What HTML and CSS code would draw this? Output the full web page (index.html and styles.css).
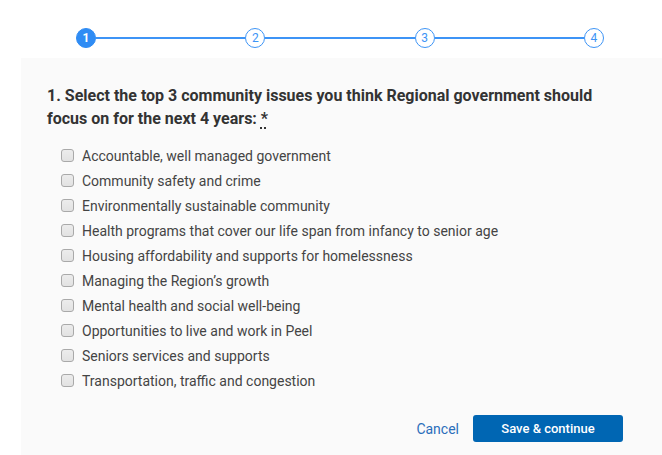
FILE: index.html
```html
<!DOCTYPE html>
<html lang="en">
<head>
<meta charset="utf-8">
<title>Survey</title>
<link rel="stylesheet" href="styles.css">
</head>
<body>
<div class="stepper">
  <span class="step active">1</span>
  <span class="line"></span>
  <span class="step">2</span>
  <span class="line"></span>
  <span class="step">3</span>
  <span class="line"></span>
  <span class="step">4</span>
</div>
<form class="panel">
  <h2 class="question">1. Select the top 3 community issues you think Regional government should focus on for the next 4 years: <abbr class="req" title="required">*</abbr></h2>
  <ul class="options">
    <li><label><input type="checkbox"><span>Accountable, well managed government</span></label></li>
    <li><label><input type="checkbox"><span>Community safety and crime</span></label></li>
    <li><label><input type="checkbox"><span>Environmentally sustainable community</span></label></li>
    <li><label><input type="checkbox"><span>Health programs that cover our life span from infancy to senior age</span></label></li>
    <li><label><input type="checkbox"><span>Housing affordability and supports for homelessness</span></label></li>
    <li><label><input type="checkbox"><span>Managing the Region’s growth</span></label></li>
    <li><label><input type="checkbox"><span>Mental health and social well-being</span></label></li>
    <li><label><input type="checkbox"><span>Opportunities to live and work in Peel</span></label></li>
    <li><label><input type="checkbox"><span>Seniors services and supports</span></label></li>
    <li><label><input type="checkbox"><span>Transportation, traffic and congestion</span></label></li>
  </ul>
  <div class="actions">
    <a class="cancel" href="#">Cancel</a>
    <button type="button" class="save">Save &amp; continue</button>
  </div>
</form>
</body>
</html>
```
FILE: styles.css
```css
html, body {
  margin: 0;
  padding: 0;
  background: #ffffff;
  font-family: Roboto, "Liberation Sans", Arial, sans-serif;
}

.stepper {
  display: flex;
  align-items: center;
  width: 528px;
  margin-left: 76px;
  height: 58px;
  padding-top: 18px;
  box-sizing: border-box;
}

.step {
  box-sizing: border-box;
  width: 20px;
  height: 20px;
  flex: none;
  border-radius: 50%;
  border: 1px solid #3d94f6;
  color: #3d94f6;
  background: #fff;
  font-size: 12px;
  line-height: 18px;
  text-align: center;
}

.step.active {
  background: #2f8cf4;
  border-color: #2f8cf4;
  color: #fff;
  font-weight: 700;
}

.line {
  flex: 1;
  height: 2px;
  background: #3d94f6;
}

.panel {
  display: block;
  margin-left: 21px;
  background: #fafafa;
  padding: 26px 39px 13px 26px;
  box-sizing: border-box;
}

.question {
  margin: 0;
  font-size: 16px;
  font-weight: 700;
  line-height: 23px;
  color: #333;
}

.req {
  text-decoration: underline dotted #333;
  text-decoration-thickness: 2px;
  text-underline-offset: 3px;
  cursor: help;
}

.options {
  list-style: none;
  margin: 13px 0 0;
  padding: 0 0 0 14px;
}

.options li {
  height: 25px;
  display: flex;
  align-items: center;
}

.options label {
  display: flex;
  align-items: center;
  gap: 8px;
  font-size: 14px;
  color: #444;
}

.options input {
  appearance: none;
  -webkit-appearance: none;
  margin: 0;
  width: 13px;
  height: 13px;
  box-sizing: border-box;
  border: 1px solid #a9a9a9;
  border-radius: 3px;
  background: linear-gradient(#ececec, #e2e2e2);
}

.actions {
  display: flex;
  justify-content: flex-end;
  align-items: center;
  gap: 14px;
  margin-top: 22px;
}

.cancel {
  color: #2a6ebb;
  font-size: 14px;
  text-decoration: none;
}

.save {
  width: 150px;
  height: 27px;
  border: none;
  border-radius: 3px;
  background: #0066b3;
  color: #fff;
  font-family: inherit;
  font-size: 13px;
  font-weight: 500;
  padding: 0;
}
```
